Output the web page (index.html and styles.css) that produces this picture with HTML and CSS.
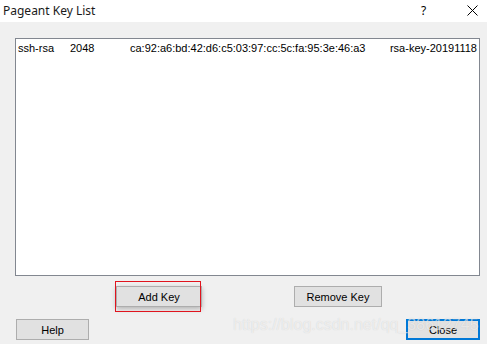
FILE: index.html
```html
<!DOCTYPE html>
<html lang="en">
  <head>
    <meta charset="UTF-8" />
    <title>Pageant Key List</title>
    <link rel="stylesheet" href="styles.css">
  </head>
  <body>
    <div class="window">
      <!-- title bar -->
      <div class="titlebar">
        <span class="title">Pageant Key List</span>
        <span class="help-mark">?</span>
        <span class="close-mark">
          <svg width="11" height="11" viewBox="0 0 11 11">
            <path d="M0.5 0.5 L10.5 10.5 M10.5 0.5 L0.5 10.5" stroke="#000" stroke-width="1" fill="none" />
          </svg>
        </span>
      </div>

      <!-- key list -->
      <div class="client">
        <div class="keylist">
          <div class="key-row">
            <span class="col-type">ssh-rsa</span>
            <span class="col-bits">2048</span>
            <span class="col-fp">ca:92:a6:bd:42:d6:c5:03:97:cc:5c:fa:95:3e:46:a3</span>
            <span class="col-comment">rsa-key-20191118</span>
          </div>
        </div>

        <div class="btn-row top-row">
          <div class="marked">
            <button class="btn btn-add">Add Key</button>
          </div>
          <button class="btn btn-remove">Remove Key</button>
        </div>

        <div class="btn-row bottom-row">
          <button class="btn btn-help">Help</button>
          <button class="btn btn-close">Close</button>
        </div>
      </div>

      <div class="watermark">https://blog.csdn.net/qq_38612745</div>
    </div>
  </body>
</html>
```

FILE: styles.css
```css
* {
  margin: 0;
  padding: 0;
  box-sizing: border-box;
}

body {
  width: 487px;
  height: 344px;
  overflow: hidden;
  background: #f0f0f0;
  font-family: "Liberation Sans", Arial, sans-serif;
  font-size: 11px;
  color: #000;
}

.window {
  position: relative;
  width: 487px;
  height: 344px;
}

/* ============ title bar ============ */
.titlebar {
  height: 22px;
  background: #fff;
  display: flex;
  align-items: center;
  padding-left: 3px;
}

.title {
  font-family: "Noto Sans", "Open Sans", sans-serif;
  font-size: 12px;
  color: #1a1a1a;
  flex: 1;
  margin-top: -2px;
}

.help-mark {
  font-family: "Noto Sans", sans-serif;
  font-size: 12px;
  width: 10px;
  margin-right: 36px;
  margin-top: -2px;
}

.close-mark {
  display: flex;
  width: 11px;
  margin-right: 9px;
  margin-top: -2px;
}

/* ============ client area ============ */
.client {
  padding: 16px 7px 0 15px;
}

.keylist {
  height: 238px;
  background: #fff;
  border: 1px solid #828790;
  padding: 3px 2px;
}

.key-row {
  display: flex;
  white-space: nowrap;
  line-height: 13px;
}

.col-type {
  width: 52px;
}

.col-bits {
  width: 60px;
}

.col-fp {
  flex: 1;
}

.btn-row {
  display: flex;
}

.top-row {
  margin-top: 10px;
  padding-left: 101px;
  gap: 92px;
}

.bottom-row {
  margin-top: 12px;
  padding-left: 1px;
  justify-content: space-between;
}

.btn {
  height: 21px;
  background: #e1e1e1;
  border: 1px solid #adadad;
  font-family: "Liberation Sans", Arial, sans-serif;
  font-size: 11px;
  color: #000;
}

.btn-add {
  width: 86px;
  box-shadow: 0 2px 5px rgba(0, 0, 0, 0.25);
}

.btn-remove {
  width: 88px;
}

.btn-help {
  width: 73px;
}

.btn-close {
  width: 74px;
  border: 2px solid #0078d7;
}

/* red annotation frame around Add Key */
.marked {
  position: relative;
}

.marked::after {
  content: "";
  position: absolute;
  left: -1px;
  top: -5px;
  width: 84px;
  height: 29px;
  border: 1px solid #e0141e;
}

.watermark {
  position: absolute;
  left: 233px;
  top: 316px;
  font-family: "Liberation Sans", Arial, sans-serif;
  font-size: 16px;
  color: rgba(255, 255, 255, 0.6);
  text-shadow: 0 0 1px rgba(0, 0, 0, 0.15);
  white-space: nowrap;
}
```
